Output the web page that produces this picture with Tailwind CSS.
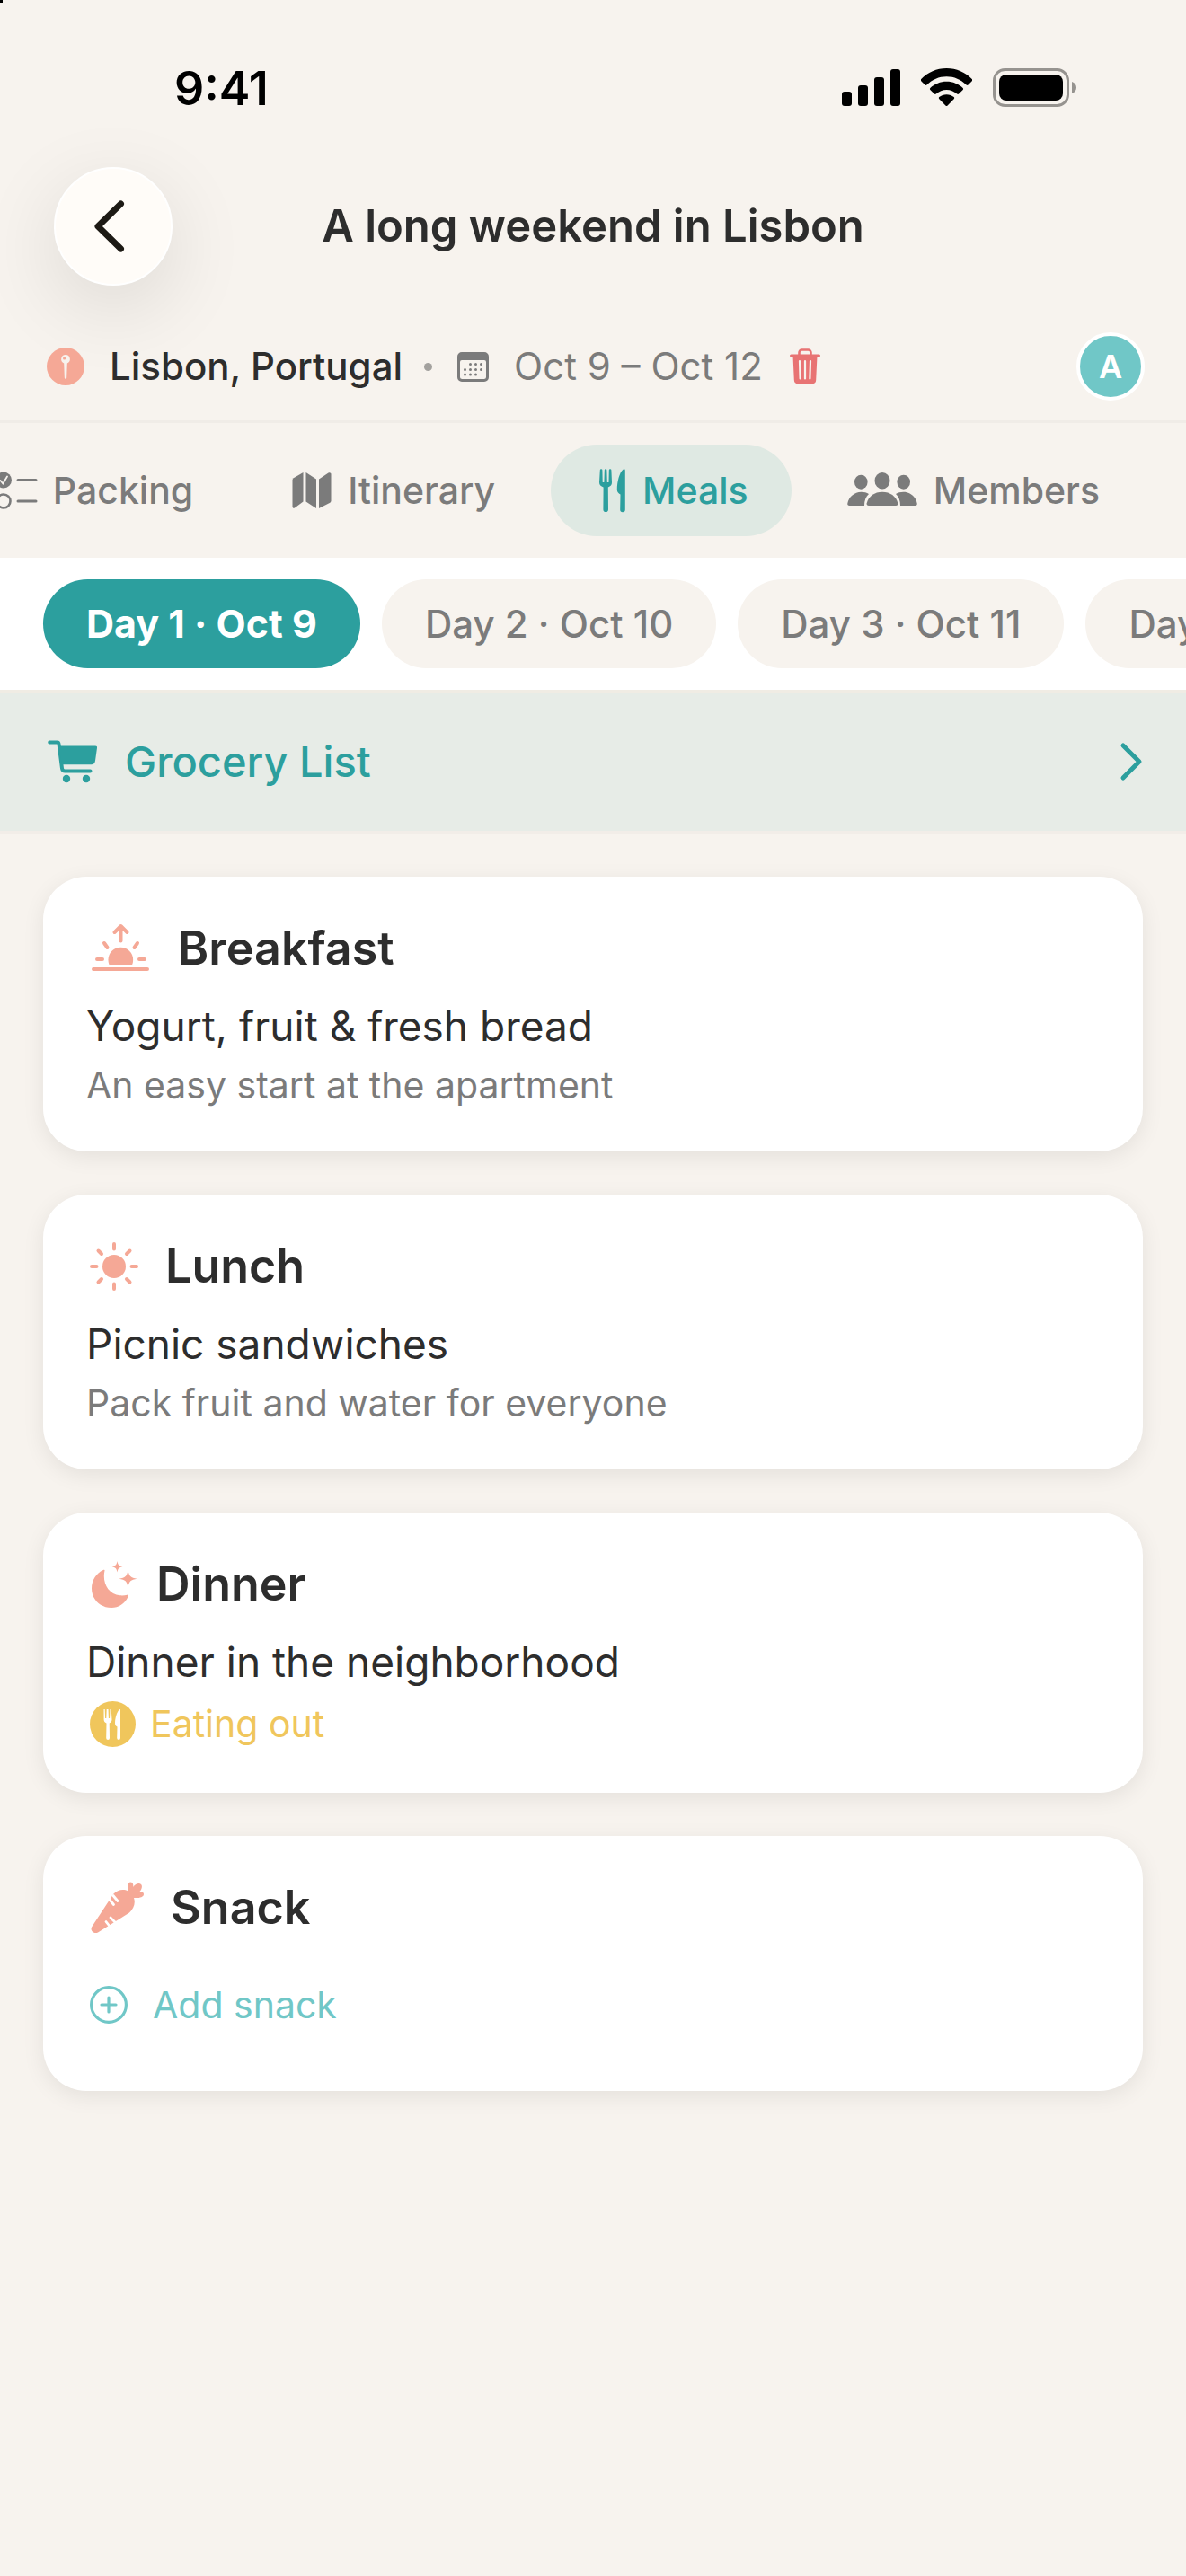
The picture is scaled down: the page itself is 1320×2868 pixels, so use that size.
<!DOCTYPE html>
<html lang="en">
<head>
  <meta charset="UTF-8" />
  <meta name="viewport" content="width=device-width, initial-scale=1.0"/>
  <title>A long weekend in Lisbon</title>
  <script src="https://cdn.jsdelivr.net/npm/@tailwindcss/browser@4"></script>
</head>
<body class="relative bg-[#f7f3ee] min-h-screen text-[#2d2d2d] font-['Inter',sans-serif] overflow-x-hidden">
  <div class="absolute top-0 left-0 size-[3px] bg-black"></div>

  <!-- Status bar -->
  <div class="flex items-center justify-between h-[186px] pl-[194px] pr-[121px] text-black">
    <span class="text-[52px] leading-[60px] font-semibold mt-3">9:41</span>
    <div class="flex items-center gap-[23px] mt-2">
      <svg class="w-[65px] h-[43px]" viewBox="0 0 65 43" fill="currentColor">
        <rect x="0" y="26" width="11" height="16" rx="3"/>
        <rect x="18" y="19" width="11" height="23" rx="3"/>
        <rect x="36" y="10" width="11" height="32" rx="3"/>
        <rect x="54" y="1" width="11" height="41" rx="3"/>
      </svg>
      <svg class="w-[57px] h-[43px]" viewBox="0 0 57 43" fill="currentColor">
        <path d="M28.500 0C39.500 0 49.500 4.300 57 12.300a1.500 1.500 0 0 1 0 1.600l-4.500 4.600a1.500 1.500 0 0 1-2 0C44.500 12.500 37 9.200 28.500 9.200S12.500 12.500 6.500 18.500a1.500 1.500 0 0 1-2 0L0 13.900a1.500 1.500 0 0 1 0-1.600C7.500 4.300 17.500 0 28.500 0z"/>
        <path d="M28.500 14.800c7 0 13.300 2.700 18.200 7.200a1.500 1.500 0 0 1 0 2l-4.600 4.600a1.500 1.500 0 0 1-2 0c-3.200-2.900-7.200-4.600-11.600-4.600s-8.400 1.700-11.600 4.600a1.500 1.500 0 0 1-2 0L10.300 24a1.500 1.500 0 0 1 0-2c4.900-4.500 11.200-7.200 18.200-7.200z"/>
        <path d="M28.500 29.200c3.100 0 6 1.100 8.200 2.900a1.500 1.500 0 0 1 0 2.200l-7.100 7.200a1.500 1.500 0 0 1-2.200 0l-7.100-7.200a1.500 1.500 0 0 1 0-2.200c2.200-1.800 5.100-2.900 8.200-2.900z"/>
      </svg>
      <svg class="w-[94px] h-[43px]" viewBox="0 0 94 43">
        <rect x="1.500" y="1.500" width="82" height="40" rx="12" fill="none" stroke="#96938f" stroke-width="3"/>
        <rect x="7" y="7" width="71" height="29" rx="8" fill="#000"/>
        <path d="M88 15v13c3-1 5-3.500 5-6.500S91 16 88 15z" fill="#96938f"/>
      </svg>
    </div>
  </div>

  <!-- Header -->
  <header class="grid grid-cols-[132px_1fr_132px] items-center px-[60px]">
    <button type="button" aria-label="Back" class="size-[132px] rounded-full bg-[#fffcf8] border-2 border-white flex items-center justify-center shadow-[0_24px_90px_rgba(0,0,0,0.11)]">
      <svg class="w-[44px] h-[64px]" viewBox="0 0 44 64" fill="none" stroke="#1d1a15" stroke-width="7" stroke-linecap="round" stroke-linejoin="round">
        <path d="M30.500 7L5 32l25.500 25"/>
      </svg>
    </button>
    <h1 class="text-center text-[49px] leading-[64px] font-semibold">A long weekend in Lisbon</h1>
  </header>

  <!-- Trip info -->
  <section class="flex items-center pt-[52px] pb-[22px] pl-[52px] pr-[46px] border-b-3 border-[#f0ece7] text-[42px] leading-[52px]">
    <svg class="size-[42px] shrink-0" viewBox="0 0 42 42">
      <circle cx="21" cy="21" r="21" fill="#f5a896"/>
      <path d="M21 8a5 5 0 0 1 1.800 9.600L22.200 33.500a1.200 1.200 0 0 1-2.400 0l-.600-15.900A5 5 0 0 1 21 8z" fill="#f7f3ee"/>
      <circle cx="19.600" cy="12" r="1.600" fill="#f5a896"/>
    </svg>
    <span class="ml-7 font-medium">Lisbon, Portugal</span>
    <span class="ml-6 size-[9px] rounded-full bg-[#a3a19e]"></span>
    <svg class="ml-7 w-[35px] h-[33px] shrink-0" viewBox="0 0 35 33" fill="#7b7b7b">
      <path fill-rule="evenodd" d="M5 0h25a5 5 0 0 1 5 5v23a5 5 0 0 1-5 5H5a5 5 0 0 1-5-5V5a5 5 0 0 1 5-5zM5 9a2 2 0 0 0-2 2v16.500A2.500 2.500 0 0 0 5.500 30h24a2.500 2.500 0 0 0 2.500-2.500V11a2 2 0 0 0-2-2z"/>
      <circle cx="14.500" cy="13.500" r="1.500"/><circle cx="20.500" cy="13.500" r="1.500"/><circle cx="26.500" cy="13.500" r="1.500"/>
      <circle cx="8.500" cy="19.500" r="1.500"/><circle cx="14.500" cy="19.500" r="1.500"/><circle cx="20.500" cy="19.500" r="1.500"/><circle cx="26.500" cy="19.500" r="1.500"/>
      <circle cx="8.500" cy="25" r="1.500"/><circle cx="14.500" cy="25" r="1.500"/><circle cx="20.500" cy="25" r="1.500"/>
    </svg>
    <span class="ml-7 text-[#7b7b7b]">Oct 9 – Oct 12</span>
    <button type="button" aria-label="Delete dates" class="ml-[30px]">
      <svg class="w-[34px] h-[40px]" viewBox="0 0 34 40">
        <path d="M10.500 8V4.500a3 3 0 0 1 3-3h7a3 3 0 0 1 3 3V8" fill="none" stroke="#e87373" stroke-width="2.600"/>
        <path d="M1.500 8h31" stroke="#e87373" stroke-width="3" stroke-linecap="round"/>
        <path d="M3.500 8h27l-1.300 27a4.500 4.500 0 0 1-4.500 4.300H9.300A4.500 4.500 0 0 1 4.800 35z" fill="#e87373"/>
        <path d="M11 14l.600 19.500M17 14v19.500M23 14l-.600 19.500" stroke="#f7f3ee" stroke-width="2.200" stroke-linecap="round"/>
      </svg>
    </button>
    <span class="ml-auto size-[76px] rounded-full border-4 border-white bg-[#70c7c7] text-white text-[36px] font-semibold flex items-center justify-center">A</span>
  </section>

  <!-- Tabs, scrolled to the end -->
  <nav class="flex justify-end gap-[14px] overflow-hidden py-6 pr-12 text-[41px] leading-[54px] font-medium text-[#7b7b7b] whitespace-nowrap">
    <a href="#" class="flex shrink-0 items-center gap-4 h-[102px] px-12">
      <svg class="w-[52px] h-[42px]" viewBox="0 0 52 42" fill="none" stroke="#7b7b7b" stroke-width="3">
        <circle cx="13" cy="9.500" r="9" fill="#7b7b7b" stroke="none"/>
        <path d="M9.500 10l2.800 3.500 4.700-8" stroke="#f7f3ee" stroke-width="1.800" stroke-linecap="round"/>
        <circle cx="13" cy="33" r="7.500" stroke-width="2.600"/>
        <path d="M29 9.500h20M29 33h20" stroke-linecap="round"/>
      </svg>
      Packing
    </a>
    <a href="#" class="flex shrink-0 items-center gap-[18px] h-[102px] px-12">
      <svg class="w-[44px] h-[42px]" viewBox="0 0 44 42" fill="#7b7b7b">
        <path d="M12.500 1v32.500L3 40.500c-1.500.800-2.500 0-2.500-1.500V9.500c0-1 .400-1.700 1.200-2.300z"/>
        <path d="M15.500 1L27 8.500V41L15.500 33.500z"/>
        <path d="M30 8.500l10.500-7c1.500-.800 3 0 3 1.500v29.500c0 1-.400 1.700-1.200 2.300L30 41z"/>
      </svg>
      Itinerary
    </a>
    <a href="#" aria-current="page" class="flex shrink-0 items-center gap-[18px] h-[102px] px-12 rounded-full bg-[#dfe9e3] text-[#2c9f9e]">
      <svg class="w-[36px] h-[50px]" viewBox="0 0 36 50" fill="#2c9f9e">
        <path d="M6.800 2.500a1.300 1.300 0 0 1 2.600 0l.300 13.500h1.700l.400-13.500a1.300 1.300 0 0 1 2.600 0l.400 13.500h1.700l.300-13.500a1.300 1.300 0 0 1 2.600 0l.600 13.500c.100 3-1.500 4.300-4.200 5.500l.200 24.800a2.800 2.800 0 0 1-5.600 0l.200-24.800c-2.700-1.200-4.700-2.500-4.600-5.500z"/>
        <path d="M34.800 3v43.500a2.800 2.800 0 0 1-5.600 0l.300-17c-2.300-1.500-3.700-2.500-3.700-5.500C25.800 15 28.500 5 32.500 1.700c1.200-1 2.300-.500 2.300 1.300z"/>
      </svg>
      Meals
    </a>
    <a href="#" class="flex shrink-0 items-center gap-[18px] h-[102px] px-12">
      <svg class="w-[78px] h-[40px]" viewBox="0 0 78 40" fill="#7b7b7b">
        <ellipse cx="15.300" cy="10.700" rx="7.300" ry="8"/><ellipse cx="62.700" cy="10.700" rx="7.300" ry="8"/><ellipse cx="39" cy="9.200" rx="8.500" ry="9.200"/>
        <path d="M2.500 37C.800 37 0 36 .300 34.500 1.600 27.500 8 21.800 15.500 21.800c3.500 0 6 .700 8.500 2.200-3.300 3-5 7.500-5 13z"/>
        <path d="M75.500 37c1.700 0 2.500-1 2.200-2.500-1.300-7-7.700-12.700-15.200-12.700-3.500 0-6 .700-8.500 2.200 3.300 3 5 7.500 5 13z"/>
        <path d="M24 37c-1.800 0-2.700-1-2.300-2.800C23.500 26.500 30.500 21.700 39 21.700s15.500 4.800 17.300 12.500c.400 1.800-.500 2.800-2.300 2.800z"/>
      </svg>
      Members
    </a>
  </nav>

  <!-- Days -->
  <div class="flex gap-6 overflow-hidden bg-white py-6 pl-12 border-b-3 border-[#f0ece4] text-[42px] leading-[51px] whitespace-nowrap">
    <button type="button" class="shrink-0 px-12 py-6 rounded-full bg-[#2c9f9e] text-white text-[43px] leading-[51px] font-bold">Day 1 · Oct 9</button>
    <button type="button" class="shrink-0 px-12 py-6 rounded-full bg-[#f7f3ee] text-[#7b7b7b] font-medium">Day 2 · Oct 10</button>
    <button type="button" class="shrink-0 px-12 py-6 rounded-full bg-[#f7f3ee] text-[#7b7b7b] font-medium">Day 3 · Oct 11</button>
    <button type="button" class="shrink-0 px-12 py-6 rounded-full bg-[#f7f3ee] text-[#7b7b7b] font-medium">Day 4 · Oct 12</button>
  </div>

  <!-- Grocery list -->
  <a href="#" class="flex items-center bg-[#e7ece7] border-b-3 border-[#f2ede8] h-[157px] pl-[53px] pr-[46px] text-[#2c9f9e] text-[47px] leading-[60px] font-medium">
    <svg class="w-[56px] h-[48px]" viewBox="0 0 56 48">
      <path d="M2.200 2.500h8.300a2 2 0 0 1 2 1.700L16 31.500a3.500 3.500 0 0 0 3.500 3h28" fill="none" stroke="#2c9f9e" stroke-width="4" stroke-linecap="round" stroke-linejoin="round"/>
      <path d="M12 6.500h41a2 2 0 0 1 2 2.300L53 23c-.500 3-2 4.200-4.500 4.200H16z" fill="#2c9f9e"/>
      <circle cx="21" cy="43" r="4.200" fill="#2c9f9e"/><circle cx="43" cy="43" r="4.200" fill="#2c9f9e"/>
    </svg>
    <span class="ml-[30px]">Grocery List</span>
    <svg class="ml-auto w-[28px] h-[44px]" viewBox="0 0 28 44" fill="none" stroke="#2c9f9e" stroke-width="5" stroke-linecap="round" stroke-linejoin="round">
      <path d="M4 4l18 18L4 40"/>
    </svg>
  </a>

  <!-- Meals -->
  <main class="flex flex-col gap-12 p-12">
    <article class="bg-white rounded-[48px] p-12 shadow-[0_6px_24px_rgba(0,0,0,0.08)]">
      <h2 class="flex items-center h-16 text-[52px] leading-[64px] font-semibold">
        <svg class="ml-1 mr-7 w-[70px] h-[56px]" viewBox="0 0 70 56" fill="none" stroke="#f5a896" stroke-width="4" stroke-linecap="round" stroke-linejoin="round">
          <path d="M4 51h60M8 40h6M55 40h6M16 22l3.500 5M53 22l-3.500 5M34.500 19.500V3.500M27.500 10l7-7 7 7"/>
          <path d="M21.500 46c-.700-1.500-1-3.500-1-5.500a13.800 13.800 0 0 1 27.600 0c0 2-.300 4-1 5.500z" fill="#f5a896" stroke="none"/>
        </svg>
        Breakfast
      </h2>
      <p class="mt-6 text-[46px] leading-[60px]">Yogurt, fruit &amp; fresh bread</p>
      <p class="mt-[10px] text-[41px] leading-[52px] text-[#7b7b7b]">An easy start at the apartment</p>
    </article>

    <article class="bg-white rounded-[48px] p-12 shadow-[0_6px_24px_rgba(0,0,0,0.08)]">
      <h2 class="flex items-center h-16 text-[52px] leading-[64px] font-semibold">
        <svg class="ml-1 mr-[30px] w-[54px] h-[54px]" viewBox="0 0 54 54" fill="none" stroke="#f5a896" stroke-width="4" stroke-linecap="round">
          <circle cx="27" cy="27" r="13" fill="#f5a896" stroke="none"/>
          <path d="M27 2v5.500M27 46.500V52M2 27h5.500M46.500 27H52M9.500 9.500l3.500 3.500M41 41l3.500 3.500M9.500 44.500L13 41M41 13l3.500-3.500"/>
        </svg>
        Lunch
      </h2>
      <p class="mt-6 text-[46px] leading-[60px]">Picnic sandwiches</p>
      <p class="mt-[10px] text-[41px] leading-[52px] text-[#7b7b7b]">Pack fruit and water for everyone</p>
    </article>

    <article class="bg-white rounded-[48px] p-12 shadow-[0_6px_24px_rgba(0,0,0,0.08)]">
      <h2 class="flex items-center h-16 text-[52px] leading-[64px] font-semibold">
        <svg class="ml-1 mr-5 w-[54px] h-[52px]" viewBox="0 0 54 52" fill="#f5a896">
          <path d="M16.500 10.500c-3 13 3.500 26.500 17 27.800 3 .300 5.500 0 8-.600 1.200-.300 1.700.300 1.300 1.300C39.500 47 32.500 52 24 52 11.500 52 2 42.500 2 30.500 2 21.500 7 13.500 14.800 10c1.200-.500 2-.200 1.700.500z"/>
          <path d="M30.500 0c.800 4.300 2 5.500 6 6.300-4 .800-5.200 2-6 6.200-.800-4.200-2-5.400-6-6.200 4-.800 5.200-2 6-6.300z"/>
          <path d="M42.500 10c1.200 7 3 8.700 10 9.700-7 1-8.800 2.700-10 9.600-1.200-6.900-3-8.600-10-9.600 7-1 8.800-2.700 10-9.700z"/>
        </svg>
        Dinner
      </h2>
      <p class="mt-6 text-[46px] leading-[60px]">Dinner in the neighborhood</p>
      <p class="mt-[10px] flex items-center h-[58px] text-[41px] leading-[52px] text-[#f0c65c]">
        <svg class="ml-1 mr-4 size-[51px]" viewBox="0 0 51 51">
          <circle cx="25.500" cy="25.500" r="25.500" fill="#f0c65c"/>
          <g fill="#fff">
            <path d="M15.500 9h1.200l.400 10h1.200l.400-10h1.800l.400 10h1.200l.400-10h1.200l.800 11.500c0 2-1 3-2.800 4l.3 16.500a1.900 1.900 0 0 1-3.800 0l.300-16.500c-1.800-1-2.900-2-2.900-4z"/>
            <path d="M34 10v31a1.900 1.900 0 0 1-3.800 0l.300-12.500c-1.700-1-2.500-1.700-2.500-4.500.300-6 2-11.500 4.600-14.500.700-.700 1.400-.500 1.400.500z"/>
          </g>
        </svg>
        Eating out
      </p>
    </article>

    <article class="bg-white rounded-[48px] p-12 shadow-[0_6px_24px_rgba(0,0,0,0.08)]">
      <h2 class="flex items-center h-16 text-[52px] leading-[64px] font-semibold">
        <svg class="ml-1 mr-[30px] w-[60px] h-[58px]" viewBox="0 0 60 58">
          <path d="M2 50.500L26 14c5-5.500 12-6 16.500-3.500C41.500 5 42 1 45 .500c3 0 3.800 3 3 5.500 3-4 7-5 9-3s.500 6-2 8.500c3-.500 5 .500 5 2.500 0 3.500-6 4.500-11 4 2 6 0 12-5 16.500L9 56.500c-4 2-9-1.500-7-6z" fill="#f5a896"/>
          <path d="M21.500 19.500l5 6M26 15.500l5 6M18 44.500l4 5M23 40l5 5" stroke="#fff" stroke-width="2.800" stroke-linecap="round"/>
        </svg>
        Snack
      </h2>
      <button type="button" class="mt-7 flex items-center h-24 text-[41px] leading-[52px] text-[#70c7c7]">
        <svg class="ml-1 mr-7 size-[42px]" viewBox="0 0 42 42" fill="none" stroke="#70c7c7" stroke-width="3.200" stroke-linecap="round">
          <circle cx="21" cy="21" r="19.400"/>
          <path d="M21 13v16M13 21h16"/>
        </svg>
        Add snack
      </button>
    </article>
  </main>
</body>
</html>
